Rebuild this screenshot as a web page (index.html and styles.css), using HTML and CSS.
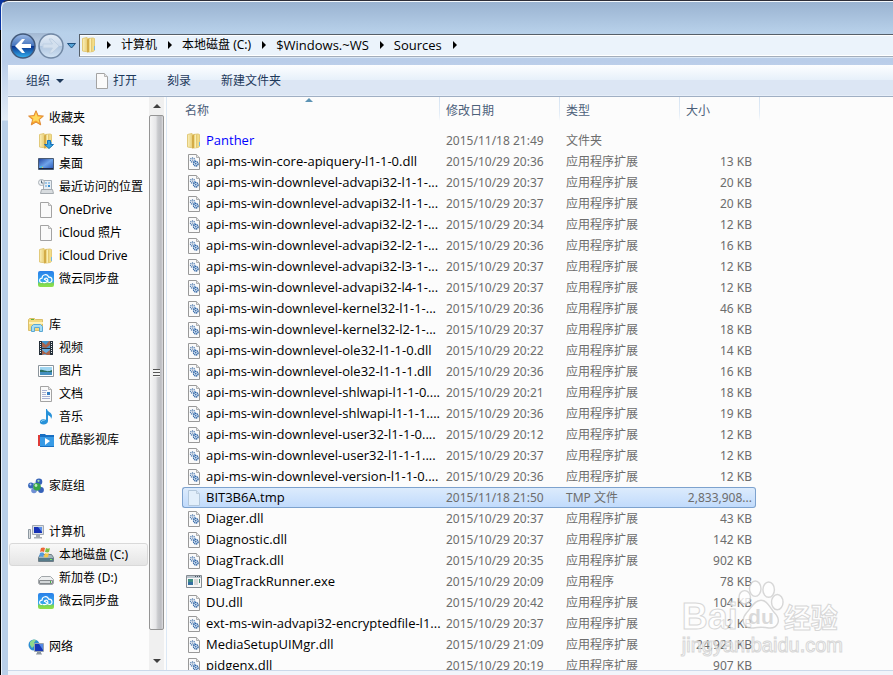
FILE: index.html
```html
<!DOCTYPE html>
<html lang="zh-CN">
<head>
	<meta charset="UTF-8">
	<meta name="viewport" content="width=device-width, initial-scale=1.0">
	<title>Sources</title>
	<link rel="stylesheet" href="styles.css">
</head>
<body>
	<!-- Icônes -->
	<svg class="sprite" aria-hidden="true">
		<defs>
			<linearGradient id="g-folder" x1="0" x2="1"><stop offset="0" stop-color="#fbf0bb"/><stop offset=".5" stop-color="#e3c565"/><stop offset="1" stop-color="#f6e28f"/></linearGradient>
			<linearGradient id="g-flap" x1="0" x2="1"><stop offset="0" stop-color="#e9cf74"/><stop offset=".5" stop-color="#faeeb4"/><stop offset="1" stop-color="#d9b551"/></linearGradient>
			<linearGradient id="g-screen" x1="0" y1="0" x2="1" y2="1"><stop offset="0" stop-color="#1d3f9c"/><stop offset=".5" stop-color="#6fa4ea"/><stop offset="1" stop-color="#2452b4"/></linearGradient>
			<linearGradient id="g-cloud" x1="0" y1="0" x2="0" y2="1"><stop offset="0" stop-color="#2a7fe8"/><stop offset=".65" stop-color="#35a8ee"/><stop offset=".8" stop-color="#7fd84e"/><stop offset="1" stop-color="#8fe04c"/></linearGradient>
			<linearGradient id="g-back" x1="0" y1="0" x2="0" y2="1"><stop offset="0" stop-color="#9dbbe6"/><stop offset=".48" stop-color="#4674bd"/><stop offset=".52" stop-color="#0b3590"/><stop offset="1" stop-color="#35b5f3"/></linearGradient>
			<linearGradient id="g-fwd" x1="0" y1="0" x2="0" y2="1"><stop offset="0" stop-color="#e4edf7"/><stop offset=".5" stop-color="#c8d8eb"/><stop offset=".52" stop-color="#b0c6e0"/><stop offset="1" stop-color="#d3e4f4"/></linearGradient>
		</defs>
		<symbol id="page" viewBox="0 0 16 16"><path d="M2.500.5h8l3 3v12h-11z" fill="#fafafa" stroke="#a3a3a3"/><path d="M10.500.5v3h3" fill="#e4e4e4" stroke="#b5b5b5"/></symbol>
		<symbol id="blank" viewBox="0 0 16 16"><path d="M2.500.5h8l3 3v12h-11z" fill="#e2effb" stroke="#b3c8dc"/><path d="M10.500.5v3h3" fill="#d3e3f3" stroke="#bccddd"/></symbol>
		<symbol id="dll" viewBox="0 0 16 16"><path d="M2.500.5h8l3 3v12h-11z" fill="#fafafa" stroke="#999"/><path d="M10.500.5v3h3" fill="#e4e4e4" stroke="#b0b0b0"/><circle cx="6.500" cy="6" r="2" fill="#fff" stroke="#4a76aa" stroke-width="1.400" stroke-dasharray="1 .6"/><circle cx="6.500" cy="6" r=".6" fill="#2b5690"/><path d="M7 9l2-3.500 3.500 4.500-2.500 2.500z" fill="#9cc0e6"/><circle cx="9.800" cy="9.800" r="2.300" fill="#d2e4f7" stroke="#2f62a0" stroke-width="1.300" stroke-dasharray="1.300 .5"/><circle cx="9.800" cy="9.800" r=".7" fill="#1f4d88"/></symbol>
		<symbol id="exe" viewBox="0 0 16 16"><path d="M.5 1.500h15v12H.5z" fill="#f7f7f7" stroke="#858b92"/><path d="M1 2h14v2H1z" fill="#b9c3cc"/><path d="M2 5h5v6H2z" fill="#3f8d83"/><path d="M2 8h5v3H2z" fill="#346fa2"/><path d="M8 6h4M8 8h4M8 10h4" stroke="#b9b9b9"/><path d="M13.500 5v4" stroke="#438974"/><path d="M9 2.500h1m1 0h1m1 0h1" stroke="#46515c"/></symbol>
		<symbol id="folder" viewBox="0 0 16 16"><path d="M1.500 1.500L6 .500l1 1 5-.5 1.500.5v12l-1.500 1-4 .5-6.500-1z" fill="url(#g-folder)" stroke="#e2ca7b"/><path d="M6 2.500l3-1v13l-3 1z" fill="#d3ab47"/><path d="M8 2l3-.5v13l-3 .5z" fill="url(#g-flap)"/><path d="M13.500 9v4" stroke="#74b7e2"/></symbol>
		<symbol id="star" viewBox="0 0 16 16"><path d="M8 .7l2.100 4.900 5.300.5-4 3.500 1.300 5.300L8 12.100l-4.700 2.800 1.300-5.300-4-3.500 5.300-.5z" fill="#f9a72b" stroke="#e08a35"/><path d="M8 2.500l1.500 3.900 4 .4-3 2.500.8 3.500L8 10.500 4.500 12l1-3.500-3-2 4-.3z" fill="#ffd95c"/></symbol>
		<symbol id="download" viewBox="0 0 16 16"><use href="#folder"/><path d="M9.500 7.500h3v4h3l-4.500 4-4.500-4h3z" fill="#34a5e6" stroke="#1872b8"/></symbol>
		<symbol id="desktop" viewBox="0 0 16 16"><path d="M.5 2.500h15v11H.5z" fill="url(#g-screen)" stroke="#4a5b73"/><path d="M1 12h14v1H1z" fill="#1a2849"/><path d="M2 10h3v2H2z" fill="#4fb6e3"/><path d="M4 11h1v1H4z" fill="#f0ca46"/></symbol>
		<symbol id="recent" viewBox="0 0 16 16"><path d="M5.500 1.500h8v9h-8z" fill="#e8eef3" stroke="#a5adb5"/><path d="M7 3h2v2H7zM10 3h2v2h-2zM7 6h2v2H7z" fill="#9dc7e8"/><path d="M10 6h2v2h-2z" fill="#388ed0"/><path d="M3.500 10.500h11l1 4h-13z" fill="#d8dcdf" stroke="#a4aaaf"/><circle cx="3.500" cy="3.500" r="3" fill="#edf1f4" stroke="#aab1b7"/><path d="M3.500 1.500v2.500h2" fill="none" stroke="#566b7c"/></symbol>
		<symbol id="cloud" viewBox="0 0 16 16"><rect width="16" height="16" rx="2" fill="url(#g-cloud)"/><path d="M4.500 11.500C.8 11.500.7 7.400 4 7.200 4.100 3 9.500 2.500 10.600 6.200c4.200-.4 4.600 5.300.7 5.300-2 0-3.100-2.400-5-3.500M5 11.500c3 .5 5.500-1 4.800-3C9 6.500 6 7 6.500 9" fill="none" stroke="#fff" stroke-width="1.200"/></symbol>
		<symbol id="library" viewBox="0 0 16 16"><path d="M.5 2.500l1-1h5l1 1h7v11H.5z" fill="#f3da80" stroke="#dbbf6a"/><path d="M1 5h14v2H1z" fill="#fff2b5"/><path d="M3 2.500h3" stroke="#63b13d"/><path d="M3.500 14.500v-5l2-2h7l2 2v5h-3v-4h-5v4z" fill="#a5ddf6" stroke="#5aa8d3"/></symbol>
		<symbol id="video" viewBox="0 0 16 16"><path d="M1 1h14v14H1z" fill="#26303a"/><path d="M4 1h8v7H4z" fill="#4595cc"/><path d="M4 9h8v6H4z" fill="#66ade0"/><path d="M4 2l4 3 3-4h1v4l-4 3-4-1zM4 10l4 3 4-3v5H9l-2-1-3 1z" fill="#a7634a"/><path d="M2.500 2v12M13.500 2v12" stroke="#e7edf1" stroke-dasharray="1 1"/></symbol>
		<symbol id="picture" viewBox="0 0 16 16"><path d="M.5 2.500h15v11H.5z" fill="#fff" stroke="#8b949b"/><path d="M2 4h12v8H2z" fill="#9fd5f1"/><path d="M2 7c4-1 6 3 12 0v2H2z" fill="#286e60"/><path d="M2 9h12v3H2z" fill="#448fbf"/></symbol>
		<symbol id="document" viewBox="0 0 16 16"><use href="#page"/><path d="M4 4.500h5M4 6.500h4M4 8.500h4M4 10.500h8M4 12.500h8" stroke="#a9b2d4"/><path d="M9 6h3v3H9z" fill="#377cc1"/></symbol>
		<symbol id="music" viewBox="0 0 16 16"><path d="M9 0c0 3 5 3 5 7 0 1-.4 2-1 3 .2-3-2-3-3-4v6c0 2-2 3.500-4.500 3.500C.5 15.500 1 10 5.500 10.200c1 0 1.800.3 2.500.6V0z" fill="#2892d9"/><path d="M3.500 13c-.3-1.300 1.700-2 3-1.500" stroke="#96d6f7" fill="none"/></symbol>
		<symbol id="youku" viewBox="0 0 16 16"><path d="M0 3h3v11H0z" fill="#df3b38"/><path d="M2 2h5l1 1h8v12H2z" fill="#196fc2"/><path d="M2 5h14v9H2z" fill="#389be6"/><path d="M7 6l5 3-5 4z" fill="#fff"/></symbol>
		<symbol id="homegroup" viewBox="0 0 16 16"><path d="M4 6l7-2 2 8-7 1z" fill="none" stroke="#91b1cb"/><circle cx="3" cy="7.500" r="2.900" fill="#3768bb"/><circle cx="11" cy="3.800" r="3.300" fill="#3561b9"/><circle cx="6" cy="12.500" r="2.800" fill="#6f8fd4"/><circle cx="13" cy="12" r="2.900" fill="#3561b9"/><circle cx="9" cy="8.700" r="3.800" fill="#39a646"/><circle cx="8" cy="7.500" r="1.400" fill="#bdebbd"/><circle cx="2.500" cy="6.500" r="1" fill="#bdcef2"/><circle cx="10.500" cy="2.800" r="1.100" fill="#a6e0a9"/></symbol>
		<symbol id="computer" viewBox="0 0 16 16"><path d="M.5 5.500h2v9h-2z" fill="#d8dcdf" stroke="#8d98a1"/><path d="M4.500 1.500h11v9h-11z" fill="#dce0e4" stroke="#a2aab3"/><path d="M6 3h8v6H6z" fill="#1732b6"/><path d="M10 3h4v5z" fill="#5b8fea"/><path d="M8 11h4v2h2v1.500H6V13h2z" fill="#a4abb1"/></symbol>
		<symbol id="drive-c" viewBox="0 0 16 16"><path d="M.5 10.500l2-3h11l2 3v4H.5z" fill="#a4b5bc" stroke="#6e7e87"/><path d="M1 11h14v3H1z" fill="#567b8b"/><path d="M12 12h2v1h-2z" fill="#79f158"/><path d="M3 1c2-1 3-.5 4 0l-1 4c-1-.6-2-.7-4 0z" fill="#ed6635"/><path d="M8 1c2 1 3 .6 4 0l-1 4c-1 .6-2 .5-4 0z" fill="#7ebd41"/><path d="M2 6c1-.6 3-.6 4 0l-1 4c-1-.6-3-.6-4 0z" fill="#519ade"/><path d="M7 6c1 .8 3 .6 4 0l-1 4c-1 .6-3 .6-4 0z" fill="#f5c748"/></symbol>
		<symbol id="drive" viewBox="0 0 16 16"><path d="M.5 9.500l3-3h9l3 3v4l-1 1h-13l-1-1z" fill="#eceeef" stroke="#a2a7aa"/><path d="M1.500 10.500h13v3h-13z" fill="#d3d7d9" stroke="#85898c"/><path d="M12 11h1v2h-1z" fill="#43b940"/></symbol>
		<symbol id="network" viewBox="0 0 16 16"><circle cx="6" cy="6" r="5.500" fill="#2d8ed1"/><path d="M2 3c2-2.500 5-2.500 6-2L6 4l1 2-3 3-2-3z" fill="#8fd98c"/><path d="M6.500 4.500h9v8h-9z" fill="#cfd6df" stroke="#98a3af"/><path d="M7 5h8v7H7z" fill="#1838b7"/><path d="M11 5h4v6z" fill="#5589e5"/><path d="M9 13h4v1.500h1v1H8v-1h1z" fill="#8b959d"/></symbol>
	</svg>

	<div class="window">
		<header class="address-row">
			<div class="history">
				<div class="pill">
					<button class="round" aria-label="后退"><svg viewBox="0 0 26 26"><circle cx="13" cy="13" r="12" fill="url(#g-back)" stroke="#42597b" stroke-width="1.500"/><path d="M5 13l7-7h3l-3.500 5H21v4h-9.500l3.500 5h-3z" fill="#fff"/></svg></button>
					<button class="round" aria-label="前进"><svg viewBox="0 0 26 26"><circle cx="13" cy="13" r="12" fill="url(#g-fwd)" stroke="#7188a5" stroke-width="1.500"/><path d="M21 13l-7-7h-3l3.500 5H5v4h9.500L11 20h3z" fill="#d3e0ee" stroke="#bfd0e3"/></svg></button>
				</div>
				<button class="recent-pages" aria-label="最近的页面"><svg viewBox="0 0 9 6"><path d="M.5.5h8l-4 4.500z" fill="#55a4d8" stroke="#1f507f"/></svg></button>
			</div>
			<nav class="address">
				<svg class="icon"><use href="#folder"/></svg>
				<i class="crumb-arrow"></i><a href="#">计算机</a>
				<i class="crumb-arrow"></i><a href="#">本地磁盘 (C:)</a>
				<i class="crumb-arrow"></i><a href="#" class="latin">$Windows.~WS</a>
				<i class="crumb-arrow"></i><a href="#" class="latin">Sources</a>
				<i class="crumb-arrow"></i>
			</nav>
		</header>

		<div class="content">
			<div class="toolbar">
				<button>组织 <i class="drop-arrow"></i></button>
				<button><svg class="icon"><use href="#page"/></svg>打开</button>
				<button>刻录</button>
				<button>新建文件夹</button>
			</div>

			<div class="panes">
				<nav class="tree">
					<ul>
						<li><a href="#"><svg class="icon"><use href="#star"/></svg>收藏夹</a>
							<ul>
								<li><a href="#"><svg class="icon"><use href="#download"/></svg>下载</a></li>
								<li><a href="#"><svg class="icon"><use href="#desktop"/></svg>桌面</a></li>
								<li><a href="#"><svg class="icon"><use href="#recent"/></svg>最近访问的位置</a></li>
								<li><a href="#"><svg class="icon"><use href="#page"/></svg>OneDrive</a></li>
								<li><a href="#"><svg class="icon"><use href="#page"/></svg>iCloud 照片</a></li>
								<li><a href="#"><svg class="icon"><use href="#folder"/></svg>iCloud Drive</a></li>
								<li><a href="#"><svg class="icon"><use href="#cloud"/></svg>微云同步盘</a></li>
							</ul>
						</li>
						<li><a href="#"><svg class="icon"><use href="#library"/></svg>库</a>
							<ul>
								<li><a href="#"><svg class="icon"><use href="#video"/></svg>视频</a></li>
								<li><a href="#"><svg class="icon"><use href="#picture"/></svg>图片</a></li>
								<li><a href="#"><svg class="icon"><use href="#document"/></svg>文档</a></li>
								<li><a href="#"><svg class="icon"><use href="#music"/></svg>音乐</a></li>
								<li><a href="#"><svg class="icon"><use href="#youku"/></svg>优酷影视库</a></li>
							</ul>
						</li>
						<li><a href="#"><svg class="icon"><use href="#homegroup"/></svg>家庭组</a></li>
						<li><a href="#"><svg class="icon"><use href="#computer"/></svg>计算机</a>
							<ul>
								<li><a href="#" class="current"><svg class="icon"><use href="#drive-c"/></svg>本地磁盘 (C:)</a></li>
								<li><a href="#"><svg class="icon"><use href="#drive"/></svg>新加卷 (D:)</a></li>
								<li><a href="#"><svg class="icon"><use href="#cloud"/></svg>微云同步盘</a></li>
							</ul>
						</li>
						<li><a href="#"><svg class="icon"><use href="#network"/></svg>网络</a></li>
					</ul>
				</nav>
				<div class="scrollbar">
					<button class="scroll-up" aria-label="向上"></button>
					<div class="thumb"><i class="grip"></i></div>
					<button class="scroll-down" aria-label="向下"></button>
				</div>
				<main class="files">
					<table>
						<colgroup><col class="col-name"><col class="col-date"><col class="col-type"><col class="col-size"></colgroup>
						<thead>
							<tr><th class="sorted">名称</th><th>修改日期</th><th>类型</th><th>大小</th></tr>
						</thead>
						<tbody>
							<tr><td class="compressed"><svg class="icon"><use href="#folder"/></svg>Panther</td><td>2015/11/18 21:49</td><td>文件夹</td><td></td></tr>
							<tr><td><svg class="icon"><use href="#dll"/></svg>api-ms-win-core-apiquery-l1-1-0.dll</td><td>2015/10/29 20:36</td><td>应用程序扩展</td><td>13 KB</td></tr>
							<tr><td><svg class="icon"><use href="#dll"/></svg>api-ms-win-downlevel-advapi32-l1-1-...</td><td>2015/10/29 20:37</td><td>应用程序扩展</td><td>20 KB</td></tr>
							<tr><td><svg class="icon"><use href="#dll"/></svg>api-ms-win-downlevel-advapi32-l1-1-...</td><td>2015/10/29 20:37</td><td>应用程序扩展</td><td>20 KB</td></tr>
							<tr><td><svg class="icon"><use href="#dll"/></svg>api-ms-win-downlevel-advapi32-l2-1-...</td><td>2015/10/29 20:34</td><td>应用程序扩展</td><td>12 KB</td></tr>
							<tr><td><svg class="icon"><use href="#dll"/></svg>api-ms-win-downlevel-advapi32-l2-1-...</td><td>2015/10/29 20:36</td><td>应用程序扩展</td><td>16 KB</td></tr>
							<tr><td><svg class="icon"><use href="#dll"/></svg>api-ms-win-downlevel-advapi32-l3-1-...</td><td>2015/10/29 20:37</td><td>应用程序扩展</td><td>12 KB</td></tr>
							<tr><td><svg class="icon"><use href="#dll"/></svg>api-ms-win-downlevel-advapi32-l4-1-...</td><td>2015/10/29 20:37</td><td>应用程序扩展</td><td>12 KB</td></tr>
							<tr><td><svg class="icon"><use href="#dll"/></svg>api-ms-win-downlevel-kernel32-l1-1-...</td><td>2015/10/29 20:36</td><td>应用程序扩展</td><td>46 KB</td></tr>
							<tr><td><svg class="icon"><use href="#dll"/></svg>api-ms-win-downlevel-kernel32-l2-1-...</td><td>2015/10/29 20:37</td><td>应用程序扩展</td><td>18 KB</td></tr>
							<tr><td><svg class="icon"><use href="#dll"/></svg>api-ms-win-downlevel-ole32-l1-1-0.dll</td><td>2015/10/29 20:22</td><td>应用程序扩展</td><td>14 KB</td></tr>
							<tr><td><svg class="icon"><use href="#dll"/></svg>api-ms-win-downlevel-ole32-l1-1-1.dll</td><td>2015/10/29 20:36</td><td>应用程序扩展</td><td>16 KB</td></tr>
							<tr><td><svg class="icon"><use href="#dll"/></svg>api-ms-win-downlevel-shlwapi-l1-1-0....</td><td>2015/10/29 20:21</td><td>应用程序扩展</td><td>18 KB</td></tr>
							<tr><td><svg class="icon"><use href="#dll"/></svg>api-ms-win-downlevel-shlwapi-l1-1-1....</td><td>2015/10/29 20:36</td><td>应用程序扩展</td><td>19 KB</td></tr>
							<tr><td><svg class="icon"><use href="#dll"/></svg>api-ms-win-downlevel-user32-l1-1-0....</td><td>2015/10/29 20:12</td><td>应用程序扩展</td><td>12 KB</td></tr>
							<tr><td><svg class="icon"><use href="#dll"/></svg>api-ms-win-downlevel-user32-l1-1-1....</td><td>2015/10/29 20:37</td><td>应用程序扩展</td><td>12 KB</td></tr>
							<tr><td><svg class="icon"><use href="#dll"/></svg>api-ms-win-downlevel-version-l1-1-0....</td><td>2015/10/29 20:36</td><td>应用程序扩展</td><td>12 KB</td></tr>
							<tr class="selected"><td><svg class="icon"><use href="#blank"/></svg>BIT3B6A.tmp</td><td>2015/11/18 21:50</td><td>TMP 文件</td><td>2,833,908...</td></tr>
							<tr><td><svg class="icon"><use href="#dll"/></svg>Diager.dll</td><td>2015/10/29 20:37</td><td>应用程序扩展</td><td>43 KB</td></tr>
							<tr><td><svg class="icon"><use href="#dll"/></svg>Diagnostic.dll</td><td>2015/10/29 20:37</td><td>应用程序扩展</td><td>142 KB</td></tr>
							<tr><td><svg class="icon"><use href="#dll"/></svg>DiagTrack.dll</td><td>2015/10/29 20:35</td><td>应用程序扩展</td><td>902 KB</td></tr>
							<tr><td><svg class="icon"><use href="#exe"/></svg>DiagTrackRunner.exe</td><td>2015/10/29 20:09</td><td>应用程序</td><td>78 KB</td></tr>
							<tr><td><svg class="icon"><use href="#dll"/></svg>DU.dll</td><td>2015/10/29 20:42</td><td>应用程序扩展</td><td>104 KB</td></tr>
							<tr><td><svg class="icon"><use href="#dll"/></svg>ext-ms-win-advapi32-encryptedfile-l1...</td><td>2015/10/29 20:37</td><td>应用程序扩展</td><td>12 KB</td></tr>
							<tr><td><svg class="icon"><use href="#dll"/></svg>MediaSetupUIMgr.dll</td><td>2015/10/29 21:09</td><td>应用程序扩展</td><td>24,921 KB</td></tr>
							<tr><td><svg class="icon"><use href="#dll"/></svg>pidgenx.dll</td><td>2015/10/29 20:19</td><td>应用程序扩展</td><td>907 KB</td></tr>
						</tbody>
					</table>
				</main>
			</div>
			<footer class="details"></footer>
		</div>
	</div>

	<!-- Filigrane -->
	<div class="watermark">
		<div class="mark-logo">
			<span class="mark-name">Bai</span>
			<svg class="paw" viewBox="0 0 48 52"><g fill="#fff" stroke="#cfcfcf" stroke-width="1.500"><ellipse cx="7" cy="18" rx="6" ry="7"/><ellipse cx="18" cy="9" rx="6" ry="8"/><ellipse cx="32" cy="10" rx="6" ry="8"/><ellipse cx="41" cy="23" rx="6" ry="8"/><path d="M24 21c7 0 9 8 14 13 8 8 3 17-6 16-5-1-11-1-16 0-10 1-14-8-7-16 5-5 8-13 15-13z"/></g><text class="paw-text" x="24" y="46" text-anchor="middle">du</text></svg>
			<span class="mark-sub">经验</span>
		</div>
		<div class="mark-url">jingyan.baidu.com</div>
	</div>
</body>
</html>
```
FILE: styles.css
```css
* {
	box-sizing: border-box;
}

body {
	margin: 0;
	height: 100vh;
	overflow: hidden;
	position: relative;
	background: linear-gradient(#0a35a0 30px, #000 30px);
	font: 12px/16px "Noto Sans", "Noto Sans CJK SC", sans-serif;
	color: #000;
}

a {
	color: inherit;
	text-decoration: none;
}

button {
	border: 0;
	padding: 0;
	background: none;
	font: inherit;
	color: inherit;
}

ul {
	list-style: none;
	margin: 0;
	padding: 0;
}

.sprite {
	position: absolute;
	width: 0;
	height: 0;
}

.icon {
	width: 16px;
	height: 16px;
	flex: none;
}

.latin,
td:first-child {
	font-family: "Open Sans", "Noto Sans CJK SC", sans-serif;
	font-size: 13px;
}

/* Cadre de la fenêtre */
.window {
	height: 100%;
	margin-left: 1px;
	display: flex;
	flex-direction: column;
	border-top: 1px solid #2d2d38;
	border-left: 1px solid #e9f2fb;
	border-top-left-radius: 7px;
	box-shadow: inset 0 1px #f4f8fc;
	background: linear-gradient(#9ab3d1 1px, #b8d1ea 32px, #b9cde9 60px, #e3ecf6 119px, #b9cfe8 120px);
}

.address-row {
	display: flex;
	align-items: flex-start;
	height: 64px;
	padding-top: 32px;
}

.history {
	display: flex;
	align-items: center;
	width: 77px;
	height: 26px;
	padding-left: 8px;
}

.pill {
	display: flex;
	gap: 2px;
	border-radius: 13px;
	background: linear-gradient(#a3b9d3, #c4d6eb 60%, #b9cde6);
}

.round {
	width: 26px;
	height: 26px;
}

.round svg,
.recent-pages svg {
	display: block;
	width: 100%;
}

.recent-pages {
	width: 9px;
	margin-left: 3px;
}

.address {
	flex: 1;
	display: flex;
	align-items: center;
	gap: 10px;
	height: 23px;
	margin-top: 1px;
	padding: 0 0 1px 1px;
	border: 1px solid #565f69;
	border-bottom-color: #a3adba;
	border-right: 0;
	background: #ebf3fb;
	box-shadow: inset 0 1px #fff, inset 0 -1px #fff, 0 1px #d9e6f5;
}

.address a {
	padding: 0 1px 1px 0;
}

.crumb-arrow {
	border-left: 4px solid #000;
	border-top: 4px solid transparent;
	border-bottom: 4px solid transparent;
}

.content {
	flex: 1;
	min-height: 0;
	margin-left: 6px;
	display: flex;
	flex-direction: column;
	background: #fcfcfc;
}

/* Barre d'outils */
.toolbar {
	display: flex;
	align-items: center;
	gap: 30px;
	height: 32px;
	padding-left: 18px;
	border-bottom: 1px solid #a0afc3;
	box-shadow: inset 0 -1px #e6eef9;
	background: linear-gradient(#fdfeff, #e6f0fa 15px, #dce6f4 15px);
	color: #1e395b;
}

.toolbar button {
	display: flex;
	align-items: center;
	gap: 3px;
}

.drop-arrow {
	margin-left: 3px;
	border-top: 4px solid #1e395b;
	border-left: 4px solid transparent;
	border-right: 4px solid transparent;
}

.panes {
	flex: 1;
	min-height: 0;
	display: flex;
}

/* Arborescence */
.tree {
	width: 141px;
	padding-top: 9px;
	overflow: hidden;
}

.tree > ul > li {
	margin-bottom: 23px;
}

.tree a {
	display: flex;
	align-items: center;
	gap: 5px;
	height: 23px;
	margin: 0 1px;
	padding-left: 18px;
	border: 1px solid transparent;
	border-radius: 3px;
	white-space: nowrap;
}

.tree ul ul a {
	padding-left: 28px;
}

.tree .current {
	border-color: #d9d9d9;
	background: linear-gradient(#f8f8f8, #e5e5e5);
}

.scrollbar {
	width: 15px;
	display: flex;
	flex-direction: column;
	background: #f0f0f0;
}

.scroll-up,
.scroll-down {
	height: 18px;
	display: flex;
	align-items: center;
	justify-content: center;
}

.scroll-up::before,
.scroll-down::before {
	content: "";
	border: 4px solid transparent;
	border-top: 0;
	border-bottom-color: #404040;
}

.scroll-down::before {
	border-top: 4px solid #404040;
	border-bottom: 0;
}

.thumb {
	flex: 1;
	display: flex;
	align-items: center;
	justify-content: center;
	margin-bottom: 22px;
	border: 1px solid #959595;
	border-radius: 2px;
	background: linear-gradient(90deg, #f6f6f6, #e6e6e8 45%, #c9cacd 60%, #bcbdc2 85%, #dedee0);
}

.grip {
	width: 7px;
	height: 8px;
	background: repeating-linear-gradient(#555 0 1px, #f4f4f4 1px 3px);
}

/* Liste des fichiers */
.files {
	flex: 1;
	min-width: 0;
	margin-left: 2px;
	padding-left: 15px;
	border-left: 1px solid #dce8f5;
	overflow: hidden;
}

table {
	width: 574px;
	table-layout: fixed;
	border-collapse: separate;
	border-spacing: 0;
}

.col-name {
	width: 258px;
}

.col-date,
.col-type {
	width: 120px;
}

th {
	position: relative;
	height: 33px;
	padding: 6px 0 0 6px;
	vertical-align: top;
	text-align: left;
	font-weight: normal;
	color: #4c607a;
}

th:first-child {
	padding-left: 3px;
}

/* séparateur de colonne */
th::after {
	content: "";
	position: absolute;
	top: 0;
	right: 0;
	width: 1px;
	height: 24px;
	background: linear-gradient(#d5e3f2, #e4edf7 70%, #fcfcfc);
}

th:last-child::after {
	right: -4px;
}

.sorted::before {
	content: "";
	position: absolute;
	top: 1px;
	left: 123px;
	border: 4px solid transparent;
	border-top: 0;
	border-bottom-color: #5d93b4;
}

td {
	height: 21px;
	padding: 0 0 0 6px;
	white-space: nowrap;
	color: #6d6d6d;
}

td:first-child {
	padding-left: 4px;
	color: #000;
}

td:first-child .icon {
	margin-right: 4px;
	vertical-align: middle;
}

td:last-child {
	padding-right: 4px;
	text-align: right;
}

td.compressed:first-child {
	color: #00f;
}

.selected td {
	border: solid #7da2ce;
	border-width: 1px 0;
	background: linear-gradient(#dcebfc, #c1dbfc);
}

.selected td:first-child {
	padding-left: 3px;
	border-left-width: 1px;
	border-radius: 3px 0 0 3px;
}

.selected td:last-child {
	padding-right: 3px;
	border-right-width: 1px;
	border-radius: 0 3px 3px 0;
}

.details {
	height: 5px;
	border-top: 1px solid #ccd9ea;
	background: #f1f5fb;
}

/* Filigrane */
.watermark {
	position: absolute;
	right: 50px;
	bottom: 20px;
	color: #fff;
	opacity: .8;
	-webkit-text-stroke: 1px #cfcfcf;
}

.mark-logo {
	display: flex;
	align-items: flex-end;
	height: 56px;
}

.mark-name {
	font: bold 36px/36px "Liberation Sans", sans-serif;
}

.paw {
	width: 46px;
	height: 52px;
	margin-bottom: 4px;
}

.paw-text {
	font: bold 22px "Liberation Sans", sans-serif;
	fill: #d2d2d2;
}

.mark-sub {
	font: bold 27px/36px "Noto Sans CJK SC", sans-serif;
}

.mark-url {
	font: 20px/20px "Liberation Sans", sans-serif;
}
```
